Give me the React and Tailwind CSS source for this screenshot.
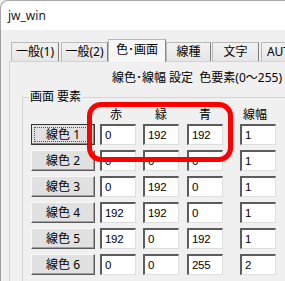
import React from 'react';

const rows = [
  { n: 1, r: '0', g: '192', b: '192', w: '1' },
  { n: 2, r: '0', g: '0', b: '0', w: '1' },
  { n: 3, r: '0', g: '192', b: '0', w: '1' },
  { n: 4, r: '192', g: '192', b: '0', w: '1' },
  { n: 5, r: '192', g: '0', b: '192', w: '1' },
  { n: 6, r: '0', g: '0', b: '255', w: '2' },
];

const tabs = [
  { label: '一般(1)', w: 'w-[48px]', ml: 'ml-0' },
  { label: '一般(2)', w: 'w-[47px]', ml: 'ml-[2px]' },
  { label: '色･画面', w: 'w-[58px]', ml: 'ml-0', active: true },
  { label: '線種', w: 'w-[45px]', ml: 'ml-0' },
  { label: '文字', w: 'w-[47px]', ml: 'ml-[1px]' },
  { label: 'AUTO', w: 'w-[44px]', ml: 'ml-[2px]' },
];

function Field({ value, ml }) {
  return (
    <div className={`${ml} shrink-0 w-[36px] h-[21px] bg-white border-2 border-t-[#5c5c5c] border-l-[#5c5c5c] border-r-[#dedede] border-b-[#dedede] border-r-[1px] border-b-[1px] pl-[3px] text-[11.5px] tracking-[-0.3px] leading-[18px] text-black font-['Liberation_Sans',sans-serif]`}>
      {value}
    </div>
  );
}

export default function App() {
  return (
    <div className="w-[285px] h-[281px] overflow-hidden relative bg-[#f0f0f0] font-['Noto_Sans','Noto_Sans_CJK_JP',sans-serif] text-black">
      {/* title bar */}
      <div className="h-[30px] bg-white border-l border-t border-[#a9a9a9] rounded-tl-[8px] flex items-center pl-[7px] text-[12px] text-[#1a1a1a]">
        jw_win
      </div>

      <div className="h-[251px] border-l border-[#9c9c9c] pt-[9px]">
        {/* tabs */}
        <div className="flex items-end h-[22px] pl-[10px] relative z-10">
          {tabs.map(t =>
            t.active ? (
              <div
                key={t.label}
                className={`${t.w} ${t.ml} shrink-0 h-[23px] -mb-[1px] bg-[#f7f7f7] border border-b-0 border-[#b9b9b9] border-r-[#8a8a8a] flex items-start justify-center pt-[2px] text-[12px] leading-[16px] whitespace-nowrap`}
              >
                {t.label}
              </div>
            ) : (
              <div
                key={t.label}
                className={`${t.w} ${t.ml} shrink-0 h-[19px] bg-gradient-to-b from-[#f2f2f2] to-[#e6e6e6] border border-b-0 border-[#b9b9b9] border-r-[#7e7e7e] flex items-center justify-center text-[12px] leading-[16px] whitespace-nowrap overflow-hidden`}
              >
                {t.label}
              </div>
            )
          )}
        </div>

        {/* tab panel */}
        <div className="ml-[8px] w-[300px] h-[230px] border border-[#d2d2d2] bg-[#f0f0f0]">
          <div className="mt-[8px] ml-[102px] h-[16px] text-[12px] leading-[16px] whitespace-nowrap">
            線色･線幅 設定&nbsp;&nbsp;色要素(0〜255)
          </div>

          <fieldset className="mt-[3px] ml-[12px] w-[290px] h-[200px] border border-[#d5d5d5]">
            <legend className="ml-[6px] px-[1px] h-[16px] text-[12px] leading-[16px]">画面 要素</legend>

            <div className="flex pl-[8px] mt-[2px] h-[16px] text-[12px] leading-[16px]">
              <div className="w-[64px] shrink-0" />
              <div className="ml-[5px] w-[36px] shrink-0 text-center -translate-x-[2px]">赤</div>
              <div className="ml-[7px] w-[36px] shrink-0 text-center">緑</div>
              <div className="ml-[8px] w-[36px] shrink-0 text-center">青</div>
              <div className="ml-[17px] w-[36px] shrink-0 text-center -translate-x-[3px]">線幅</div>
            </div>

            <div className="flex flex-col gap-[5px] pl-[8px] mt-[1px]">
              {rows.map(row => (
                <div key={row.n} className="flex items-center">
                  {row.n === 1 ? (
                    <div className="w-[64px] shrink-0 h-[21px] bg-[#e1e1e1] border border-[#333] shadow-[inset_-1px_-1px_0_#8a8a8a] p-[2px]">
                      <div className="w-full h-full border border-dotted border-[#555] flex items-center justify-center text-[12px] leading-[16px]">
                        線色 {row.n}
                      </div>
                    </div>
                  ) : (
                    <div className="w-[64px] shrink-0 h-[21px] bg-[#e1e1e1] border border-t-[#f8f8f8] border-l-[#f8f8f8] border-r-[#5a5a5a] border-b-[#5a5a5a] shadow-[inset_-1px_-1px_0_#a0a0a0] flex items-center justify-center text-[12px] leading-[16px]">
                      線色 {row.n}
                    </div>
                  )}
                  <Field value={row.r} ml="ml-[5px]" />
                  <Field value={row.g} ml="ml-[7px]" />
                  <Field value={row.b} ml="ml-[8px]" />
                  <Field value={row.w} ml="ml-[17px]" />
                </div>
              ))}
            </div>
          </fieldset>
        </div>
      </div>

      {/* red annotation */}
      <div className="absolute left-[87px] top-[102px] w-[146px] h-[60px] border-[5px] border-[#ff0000] rounded-[14px]" />
    </div>
  );
}
